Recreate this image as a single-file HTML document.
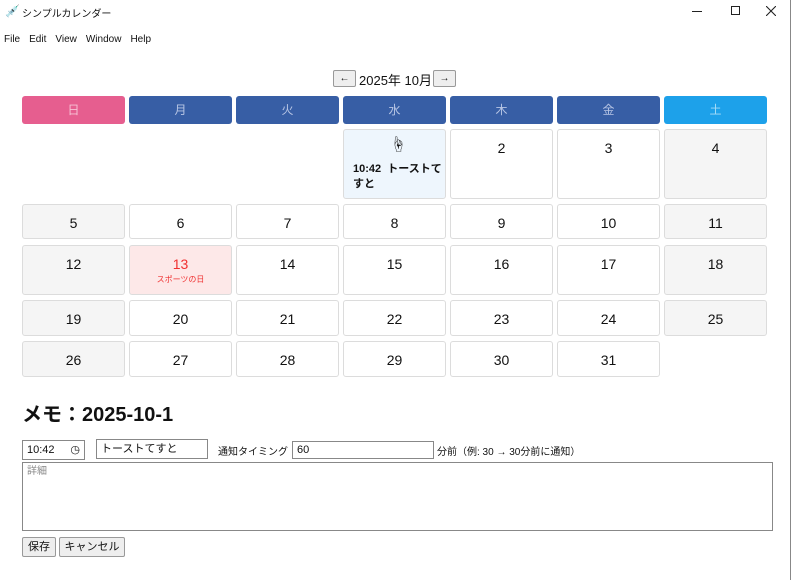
<!DOCTYPE html>
<html><head><meta charset="utf-8"><style>
*{box-sizing:border-box;margin:0;padding:0}
body{width:791px;height:580px;background:#fff;position:relative;overflow:hidden;font-family:"Liberation Sans","Noto Sans CJK JP",sans-serif;color:#111}
.a{position:absolute}
.t{font-size:12px}
.menu span{margin-right:9px;font-size:10px}
.h{position:absolute;top:96px;height:28px;width:103px;border-radius:3px;background:#375ea5;color:#b7c5e4;font-size:12px;text-align:center;line-height:28px}
.c{position:absolute;width:103px;border:1px solid #dcdcdc;border-radius:3px;background:#fff;text-align:center;font-size:14px;padding-top:10px}
.w{background:#f5f5f5}
.btn{position:absolute;border:1px solid #999;background:#eee;border-radius:2px;font-size:12px;text-align:center}
.inp{position:absolute;border:1px solid #888;background:#fff;font-size:11px;padding-left:4px;line-height:18px}
</style></head><body>
<div class="a" style="right:0;top:0;width:1px;height:580px;background:#888"></div>
<div class="a" style="left:5px;top:4px;font-size:12px;color:#5aa0e6">&#x1F489;</div>
<div class="a t" style="left:22px;top:5px;font-size:10px">シンプルカレンダー</div>
<div class="a" style="left:692px;top:11px;width:10px;height:1px;background:#222"></div>
<div class="a" style="left:731px;top:6px;width:9px;height:9px;border:1px solid #222"></div>
<svg class="a" style="left:766px;top:6px" width="10" height="10"><path d="M0 0L10 10M10 0L0 10" stroke="#222" stroke-width="1.1"/></svg>
<div class="a menu" style="left:4px;top:29px"><span>File</span><span>Edit</span><span>View</span><span>Window</span><span>Help</span></div>
<div class="btn" style="left:333px;top:70px;width:23px;height:17px;line-height:15px;font-size:10px">←</div>
<div class="a" style="left:359px;top:70px;font-size:13px">2025年 10月</div>
<div class="btn" style="left:433px;top:70px;width:23px;height:17px;line-height:15px;font-size:10px">→</div>

<div class="h" style="left:22px;background:#e65e8f;color:#f7c3d6">日</div>
<div class="h" style="left:129px">月</div>
<div class="h" style="left:236px">火</div>
<div class="h" style="left:343px">水</div>
<div class="h" style="left:450px">木</div>
<div class="h" style="left:557px">金</div>
<div class="h" style="left:664px;background:#1da1ea;color:#a5dcf7">土</div>

<div class="c" style="left:343px;top:129px;height:70px;background:#eef6fd;text-align:left;padding:32px 0 0 9px;font-size:11px;font-weight:bold;line-height:15px">10:42&nbsp; トーストて<br>すと</div>
<div class="a" style="left:390px;top:131px;font-size:16px">☝</div>
<div class="c" style="left:450px;top:129px;height:70px">2</div>
<div class="c" style="left:557px;top:129px;height:70px">3</div>
<div class="c w" style="left:664px;top:129px;height:70px">4</div>

<div class="c w" style="left:22px;top:204px;height:35px">5</div>
<div class="c" style="left:129px;top:204px;height:35px">6</div>
<div class="c" style="left:236px;top:204px;height:35px">7</div>
<div class="c" style="left:343px;top:204px;height:35px">8</div>
<div class="c" style="left:450px;top:204px;height:35px">9</div>
<div class="c" style="left:557px;top:204px;height:35px">10</div>
<div class="c w" style="left:664px;top:204px;height:35px">11</div>

<div class="c w" style="left:22px;top:245px;height:50px">12</div>
<div class="c" style="left:129px;top:245px;height:50px;background:#fde8e8;color:#f03030">13<div style="font-size:8px;margin-top:2px">スポーツの日</div></div>
<div class="c" style="left:236px;top:245px;height:50px">14</div>
<div class="c" style="left:343px;top:245px;height:50px">15</div>
<div class="c" style="left:450px;top:245px;height:50px">16</div>
<div class="c" style="left:557px;top:245px;height:50px">17</div>
<div class="c w" style="left:664px;top:245px;height:50px">18</div>

<div class="c w" style="left:22px;top:300px;height:36px">19</div>
<div class="c" style="left:129px;top:300px;height:36px">20</div>
<div class="c" style="left:236px;top:300px;height:36px">21</div>
<div class="c" style="left:343px;top:300px;height:36px">22</div>
<div class="c" style="left:450px;top:300px;height:36px">23</div>
<div class="c" style="left:557px;top:300px;height:36px">24</div>
<div class="c w" style="left:664px;top:300px;height:36px">25</div>

<div class="c w" style="left:22px;top:341px;height:36px">26</div>
<div class="c" style="left:129px;top:341px;height:36px">27</div>
<div class="c" style="left:236px;top:341px;height:36px">28</div>
<div class="c" style="left:343px;top:341px;height:36px">29</div>
<div class="c" style="left:450px;top:341px;height:36px">30</div>
<div class="c" style="left:557px;top:341px;height:36px">31</div>

<div class="a" style="left:22px;top:398px;font-size:20px;font-weight:bold">メモ：2025-10-1</div>

<div class="inp" style="left:22px;top:440px;width:63px;height:20px">10:42<span style="position:absolute;right:4px;font-size:11px">◷</span></div>
<div class="inp" style="left:96px;top:439px;width:112px;height:20px">トーストてすと</div>
<div class="a" style="left:218px;top:443px;font-size:10px">通知タイミング</div>
<div class="inp" style="left:292px;top:441px;width:142px;height:18px;line-height:16px">60</div>
<div class="a" style="left:437px;top:443px;font-size:10px">分前（例: 30 → 30分前に通知）</div>
<div class="inp" style="left:22px;top:462px;width:751px;height:69px;color:#888;font-size:10px">詳細</div>
<div class="btn" style="left:22px;top:537px;width:34px;height:20px;line-height:18px;font-size:11px">保存</div>
<div class="btn" style="left:59px;top:537px;width:66px;height:20px;line-height:18px;font-size:11px">キャンセル</div>
</body></html>
